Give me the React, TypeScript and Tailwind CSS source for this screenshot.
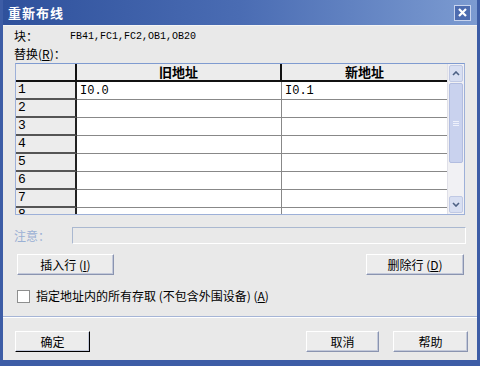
import React from 'react';

const cjk = { fontFamily: '"SimSun", "Noto Sans CJK SC", sans-serif' };
const mono = { fontFamily: '"Liberation Mono", "Noto Sans CJK SC", monospace' };

const Btn: React.FC<{ label: React.ReactNode; className?: string }> = ({ label, className = '' }) => (
  <button
    className={`h-[21px] bg-[#ececec] border border-t-white border-l-white border-r-[#8a94b0] border-b-[#8a94b0] shadow-[inset_-1px_-1px_0_#c3c9da] text-[12px] text-black leading-none ${className}`}
  >
    {label}
  </button>
);

const rows = [
  ['1', 'I0.0', 'I0.1'],
  ['2', '', ''],
  ['3', '', ''],
  ['4', '', ''],
  ['5', '', ''],
  ['6', '', ''],
  ['7', '', ''],
];

const App: React.FC = () => {
  return (
    <div className="w-[480px] h-[366px] flex flex-col bg-[#3d5da6] p-[3px] pt-0" style={cjk}>
      {/* title bar */}
      <div className="h-[25px] flex items-center justify-between pl-[5px] pr-[6px] bg-gradient-to-r from-[#2f519c] via-[#4a6cb3] to-[#7c9bd1]">
        <span className="text-white font-bold text-[13px] tracking-[1px]">重新布线</span>
        <div className="w-[17px] h-[16px] border border-[#c8d4ee] bg-[#4d6cb0] flex items-center justify-center">
          <svg width="9" height="9" viewBox="0 0 9 9">
            <path d="M1 1 L8 8 M8 1 L1 8" stroke="white" strokeWidth="2.2" />
          </svg>
        </div>
      </div>

      <div className="flex-1 bg-[#e9e9e9] flex flex-col text-[12px] text-black border-t border-[#f4f4f4]">
        <div className="flex items-center h-[16px] mt-[2px] pl-[11px]">
          <span className="w-[56px]">块：</span>
          <span className="text-[10px]" style={mono}>FB41,FC1,FC2,OB1,OB20</span>
        </div>
        <div className="h-[16px] mt-[2px] pl-[11px] flex items-center">
          替换(<span className="underline">R</span>)：
        </div>

        {/* table */}
        <div className="ml-[12px] mr-[12px] mt-[1px] h-[152px] border border-[#9db0d8] border-t-[#7f9bd0] bg-[#e6e6e6] flex overflow-hidden">
          <div className="flex-1 flex flex-col">
            <div className="flex h-[18px] bg-[#ececec] border-b-2 border-[#111]">
              <div className="w-[61px] border-r-2 border-[#111]" />
              <div className="w-[205px] border-r-2 border-[#111] flex items-center justify-center font-bold text-[13px]">旧地址</div>
              <div className="flex-1 flex items-center justify-center font-bold text-[13px]">新地址</div>
            </div>
            {rows.map((r) => (
              <div key={r[0]} className="flex h-[18px]">
                <div className="w-[61px] bg-[#ececec] border-r-2 border-b-2 border-[#222] border-b-[#555] flex items-center pl-[2px]" style={mono}>
                  <span className="text-[13px]">{r[0]}</span>
                </div>
                <div className="w-[205px] bg-white border-r border-b border-[#888] flex items-center pl-[3px] text-[12px]" style={mono}>
                  {r[1]}
                </div>
                <div className="flex-1 bg-white border-b border-[#888] flex items-center pl-[3px] text-[12px]" style={mono}>
                  {r[2]}
                </div>
              </div>
            ))}
            <div className="flex h-[10px]">
              <div className="w-[61px] bg-[#ececec] border-r-2 border-[#222] pl-[2px] text-[13px] leading-[14px]" style={mono}>8</div>
              <div className="w-[205px] bg-white border-r border-[#888]" />
              <div className="flex-1 bg-white" />
            </div>
          </div>
          {/* scrollbar */}
          <div className="w-[17px] bg-[#f1f1f4] flex flex-col border-l border-[#e0e0e8]">
            <div className="h-[17px] m-[1px] rounded-[2px] bg-[#d8dff2] border border-[#c0c9e4] flex items-center justify-center">
              <svg width="8" height="5" viewBox="0 0 8 5"><path d="M1 4 L4 1 L7 4" stroke="#4d6185" strokeWidth="1.6" fill="none" /></svg>
            </div>
            <div className="h-[80px] mx-[1px] rounded-[2px] bg-[#c9d2ee] border border-[#b2bde0] flex items-center justify-center">
              <div className="flex flex-col gap-[1px]">
                <div className="w-[6px] h-px bg-[#eef1fb]" />
                <div className="w-[6px] h-px bg-[#eef1fb]" />
                <div className="w-[6px] h-px bg-[#eef1fb]" />
              </div>
            </div>
            <div className="flex-1" />
            <div className="h-[17px] m-[1px] rounded-[2px] bg-[#d8dff2] border border-[#c0c9e4] flex items-center justify-center">
              <svg width="8" height="5" viewBox="0 0 8 5"><path d="M1 1 L4 4 L7 1" stroke="#4d6185" strokeWidth="1.6" fill="none" /></svg>
            </div>
          </div>
        </div>

        {/* note */}
        <div className="flex items-center mt-[12px] ml-[11px] mr-[11px] h-[17px]">
          <span className="w-[58px] text-[#9ab0d4]">注意：</span>
          <div className="flex-1 h-[17px] border border-[#aab8d0] border-b-white border-r-white bg-[#e9e9e9]" />
        </div>

        <div className="flex justify-between mt-[10px] ml-[14px] mr-[13px]">
          <Btn label={<>插入行 (<span className="underline">I</span>)</>} className="w-[97px]" />
          <Btn label={<>删除行 (<span className="underline">D</span>)</>} className="w-[98px]" />
        </div>

        <div className="flex items-center mt-[14px] ml-[14px] h-[14px]">
          <div className="w-[13px] h-[13px] bg-white border border-[#8e8f8f] mr-[6px]" />
          <span>指定地址内的所有存取 (不包含外围设备) (<span className="underline">A</span>)</span>
        </div>

        <div className="mt-[13px] h-[2px] border-t border-[#a6b5d6] border-b border-b-white" />

        <div className="flex items-center mt-[13px] ml-[12px] mr-[9px]">
          <Btn label="确定" className="w-[75px] border-l-black border-t-black border-r-black border-b-black" />
          <div className="flex-1" />
          <Btn label="取消" className="w-[73px]" />
          <Btn label="帮助" className="w-[75px] ml-[14px]" />
        </div>
      </div>
      <div className="h-[3px]" />
    </div>
  );
};

export default App;
